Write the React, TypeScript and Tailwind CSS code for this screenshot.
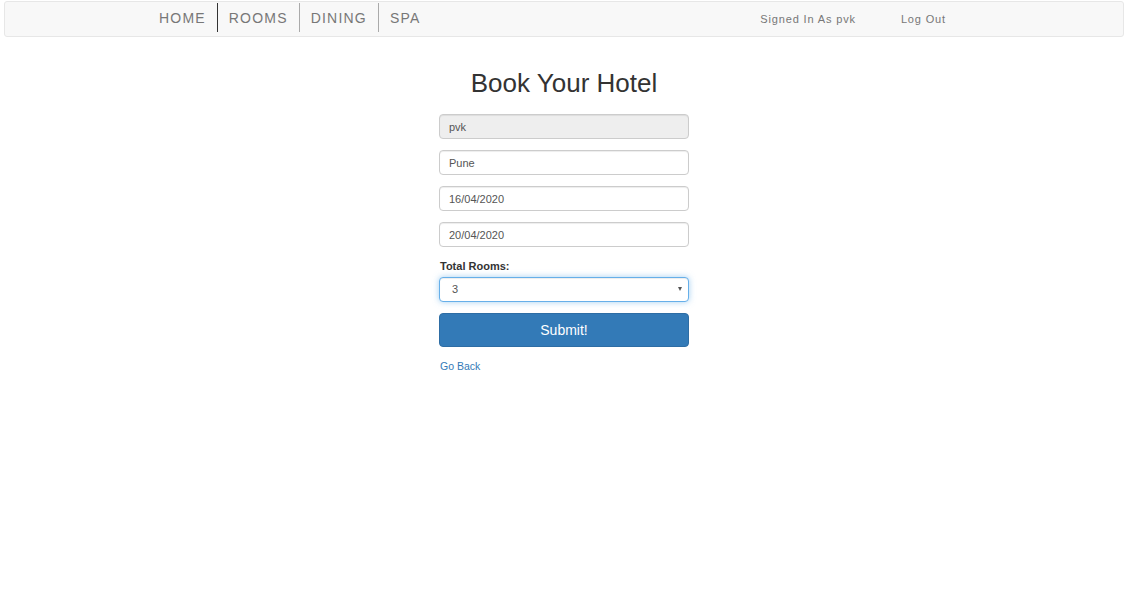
import React from "react";

const navItems = ["HOME", "ROOMS", "DINING", "SPA"];

const Navbar = () => {
  return (
    <nav className="ml-[4px] mr-[10px] mt-px h-[36px] bg-[#f8f8f8] border border-[#e7e7e7] rounded-[3px] flex items-start">
      <ul className="flex ml-[143px] mt-px">
        {navItems.map((item, i) => (
          <li
            key={item}
            className={`px-[11px] h-[29px] flex items-center pt-[2px] text-[14px] tracking-[1.2px] text-[#777] ${
              i === 0 ? "" : i === 1 ? "border-l border-[#333]" : "border-l border-[#aaa]"
            }`}
          >
            {item}
          </li>
        ))}
      </ul>
      <div className="ml-auto mr-[177px] flex items-center h-[35px] text-[11px] tracking-[0.85px] text-[#777]">
        <span>Signed In As pvk</span>
        <span className="ml-[45px]">Log Out</span>
      </div>
    </nav>
  );
};

const inputClass =
  "w-full h-[25px] px-[9px] text-[11px] text-[#555] border border-[#ccc] rounded-[4px] shadow-[inset_0_1px_1px_rgba(0,0,0,0.075)] outline-none";

const BookingForm = () => {
  return (
    <div className="flex justify-center pr-[6px]">
      <div className="w-[250px] flex flex-col">
        <h1 className="text-center text-[26px] leading-[30px] text-[#333] mt-[31px] mb-[16px]">
          Book Your Hotel
        </h1>
        <input className={`${inputClass} bg-[#eee]`} value="pvk" readOnly />
        <input className={`${inputClass} bg-white mt-[11px]`} value="Pune" readOnly />
        <input className={`${inputClass} bg-white mt-[11px]`} value="16/04/2020" readOnly />
        <input className={`${inputClass} bg-white mt-[11px]`} value="20/04/2020" readOnly />
        <label className="mt-[12px] text-[11px] font-bold text-[#333] leading-[14px] pl-px">
          Total Rooms:
        </label>
        <div className="mt-[4px] h-[25px] relative flex items-center pl-[12px] text-[11px] text-[#555] bg-white border border-[#66afe9] rounded-[4px] shadow-[inset_0_1px_1px_rgba(0,0,0,0.075),0_0_6px_rgba(102,175,233,0.6)]">
          3
          <span className="absolute right-[6px] top-[9px] w-0 h-0 border-l-[2.5px] border-r-[2.5px] border-t-[4px] border-l-transparent border-r-transparent border-t-[#555]" />
        </div>
        <button className="mt-[11px] h-[34px] rounded-[4px] bg-[#337ab7] border border-[#2e6da4] text-white text-[14px]">
          Submit!
        </button>
        <a href="#" className="mt-[12px] text-[10.5px] text-[#337ab7] pl-px">
          Go Back
        </a>
      </div>
    </div>
  );
};

export default function App() {
  return (
    <div className="min-h-[611px] bg-white font-['Liberation_Sans',Arial,sans-serif]">
      <Navbar />
      <BookingForm />
    </div>
  );
}
